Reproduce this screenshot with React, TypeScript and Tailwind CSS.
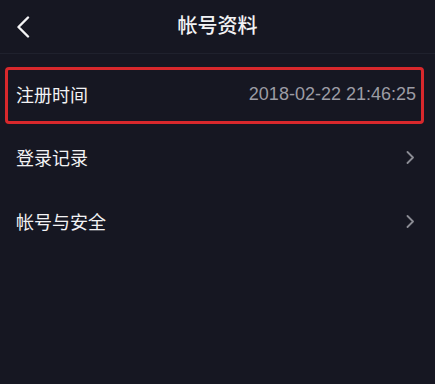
import React from "react";

const Chevron = () => (
  <svg width="9" height="13" viewBox="0 0 9 13" fill="none">
    <polyline points="1.5,1 7,6.5 1.5,12" stroke="#8b8c94" strokeWidth="1.8" strokeLinecap="round" strokeLinejoin="round" />
  </svg>
);

export default function App() {
  return (
    <div
      className="w-[435px] h-[384px] bg-[#161722] text-[#f2f2f4] overflow-hidden"
      style={{ fontFamily: '"Noto Sans CJK SC", "Noto Sans", sans-serif' }}
    >
      <div className="h-[54px] grid grid-cols-[1fr_auto_1fr] items-center border-b border-[#1f212d]">
        <div className="pl-[16px] flex items-center">
          <svg width="14" height="22" viewBox="0 0 14 22" fill="none">
            <polyline points="12,1.5 2.5,11 12,20.5" stroke="#f4f4f6" strokeWidth="2.4" strokeLinecap="round" strokeLinejoin="round" />
          </svg>
        </div>
        <div className="text-[20px] leading-none font-medium pb-[3px]">帐号资料</div>
        <div />
      </div>
      <div className="pt-[13px]">
        <div className="ml-[5px] mr-[11px] h-[57px] border-[3px] border-[#d8282c] rounded-[4px] flex items-center justify-between pl-[8px] pr-[5px] pb-[4px]">
          <span className="text-[18px] leading-none">注册时间</span>
          <span
            className="text-[18px] leading-none text-[#9c9ca4]"
            style={{ fontFamily: '"Liberation Sans", sans-serif' }}
          >
            2018-02-22 21:46:25
          </span>
        </div>
        <div className="mt-[2px] h-[64px] pl-[16px] pr-[20px] pb-[2px] flex items-center justify-between">
          <span className="text-[18px] leading-none">登录记录</span>
          <Chevron />
        </div>
        <div className="h-[64px] pl-[16px] pr-[20px] pb-[2px] flex items-center justify-between">
          <span className="text-[18px] leading-none">帐号与安全</span>
          <Chevron />
        </div>
      </div>
    </div>
  );
}
